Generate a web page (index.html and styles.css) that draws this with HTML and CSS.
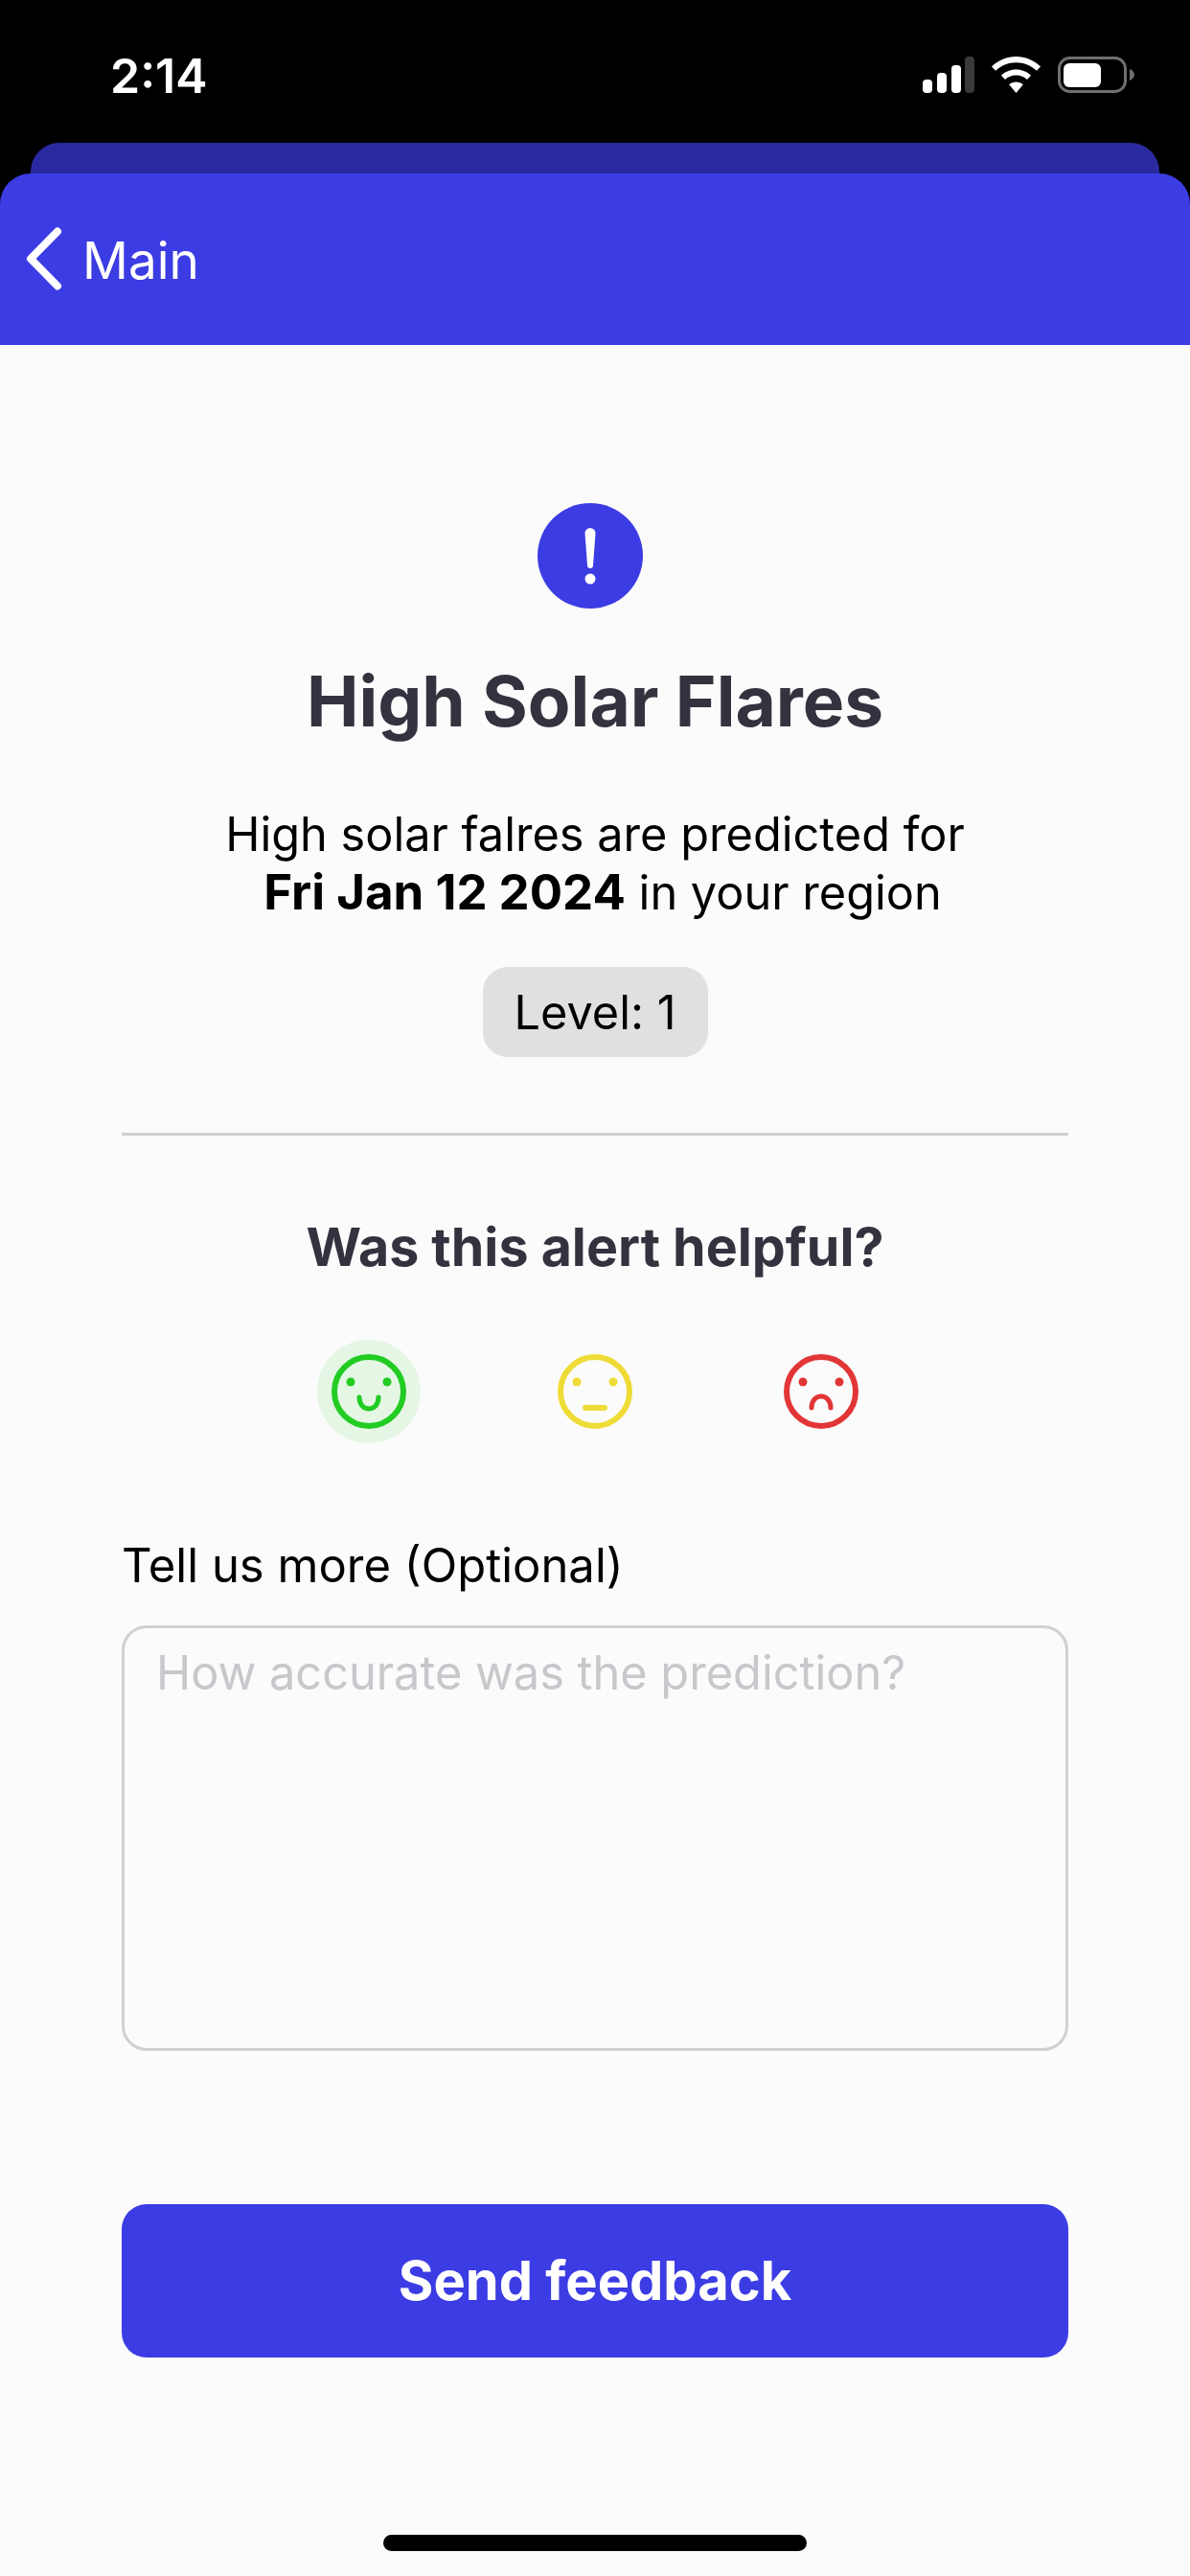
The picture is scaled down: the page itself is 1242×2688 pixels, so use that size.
FILE: index.html
```html
<!DOCTYPE html>
<html lang="en">
<head>
<meta charset="utf-8">
<title>High Solar Flares</title>
<link rel="stylesheet" href="styles.css">
</head>
<body>
<div class="screen">
  <header class="status">
    <span class="time">2:14</span>
    <div class="status-icons">
      <svg class="signal" width="54" height="38" viewBox="0 0 54 38">
        <rect x="0" y="24" width="10" height="14" rx="4" fill="#fff"/>
        <rect x="15" y="17" width="10" height="21" rx="4" fill="#fff"/>
        <rect x="30" y="9" width="10" height="29" rx="4" fill="#fff"/>
        <rect x="44" y="0" width="10" height="38" rx="4" fill="#3a3a3a"/>
      </svg>
      <svg class="wifi" width="51" height="38" viewBox="0 0 51 38">
        <path d="M25.5 0C35 0 44 3.800 51 10.500L47 14.800C41.200 9.300 33.700 6.200 25.500 6.200C17.300 6.200 9.800 9.300 4 14.800L0 10.500C7 3.800 16 0 25.500 0Z" fill="#fff"/>
        <path d="M25.500 13.500C31.500 13.500 36.900 15.800 41 19.700L37 24C33.900 21.100 29.900 19.500 25.500 19.500C21.100 19.500 17.100 21.100 14 24L10 19.700C14.100 15.800 19.500 13.500 25.500 13.500Z" fill="#fff"/>
        <path d="M25.500 26.500C28.300 26.500 30.800 27.500 32.800 29.200L25.500 38L18.200 29.200C20.200 27.500 22.700 26.500 25.500 26.500Z" fill="#fff"/>
      </svg>
      <svg class="battery" width="80" height="38" viewBox="0 0 80 38">
        <rect x="1.500" y="1.500" width="69" height="35" rx="11" fill="none" stroke="#6e6e6e" stroke-width="3"/>
        <rect x="6" y="7" width="39" height="25" rx="6" fill="#fff"/>
        <path d="M75 13C78 14 80 16.500 80 19C80 21.500 78 24 75 25Z" fill="#6e6e6e"/>
      </svg>
    </div>
  </header>

  <div class="sheet-back"></div>

  <nav class="nav">
    <svg class="chevron" width="38" height="66" viewBox="0 0 38 66">
      <path d="M33 4.500L5 33L33 61.500" fill="none" stroke="#fff" stroke-width="8" stroke-linecap="round" stroke-linejoin="round"/>
    </svg>
    <span class="nav-label">Main</span>
  </nav>

  <main class="content">
    <div class="alert-icon">
      <svg width="110" height="110" viewBox="0 0 110 110">
        <path d="M49.500 31.500a5.500 5.500 0 0 1 11 0L58 65a3 3 0 0 1-6 0Z" fill="#fff"/>
        <circle cx="55" cy="79" r="5.500" fill="#fff"/>
      </svg>
    </div>
    <h1 class="title">High Solar Flares</h1>
    <p class="message">High solar falres are predicted for<br><strong>Fri Jan 12 2024</strong> in your region</p>
    <div class="level">Level: 1</div>
    <hr class="divider">
    <h2 class="question">Was this alert helpful?</h2>
    <div class="faces">
      <div class="face face-selected">
        <svg width="78" height="78" viewBox="0 0 78 78" fill="none">
          <circle cx="39" cy="39" r="36" stroke="#22cc22" stroke-width="6"/>
          <circle cx="20" cy="29" r="4.500" fill="#22cc22"/>
          <circle cx="58" cy="29" r="4.500" fill="#22cc22"/>
          <path d="M29 45C29 61 49 61 49 45" stroke="#22cc22" stroke-width="5" stroke-linecap="round"/>
        </svg>
      </div>
      <div class="face">
        <svg width="78" height="78" viewBox="0 0 78 78" fill="none">
          <circle cx="39" cy="39" r="36" stroke="#efdb36" stroke-width="6"/>
          <circle cx="20" cy="29" r="4.500" fill="#efdb36"/>
          <circle cx="58" cy="29" r="4.500" fill="#efdb36"/>
          <path d="M29 56H49" stroke="#efdb36" stroke-width="6" stroke-linecap="round"/>
        </svg>
      </div>
      <div class="face">
        <svg width="78" height="78" viewBox="0 0 78 78" fill="none">
          <circle cx="39" cy="39" r="36" stroke="#e23636" stroke-width="6"/>
          <circle cx="20" cy="29" r="4.500" fill="#e23636"/>
          <circle cx="58" cy="29" r="4.500" fill="#e23636"/>
          <path d="M29 56C29 40 49 40 49 56" stroke="#e23636" stroke-width="5" stroke-linecap="round"/>
        </svg>
      </div>
    </div>
    <div class="field-label">Tell us more (Optional)</div>
    <div class="input"><span class="placeholder">How accurate was the prediction?</span></div>
    <button class="send" type="button">Send feedback</button>
    <div class="home-bar"></div>
  </main>
</div>
</body>
</html>
```
FILE: styles.css
```css
* { box-sizing: border-box; }
html, body { margin: 0; padding: 0; }
body {
  width: 1242px;
  height: 2688px;
  overflow: hidden;
  background: #000;
  font-family: Inter, "Liberation Sans", sans-serif;
}
.screen { width: 1242px; height: 2688px; display: flex; flex-direction: column; }

.status {
  height: 149px;
  flex: none;
  display: flex;
  justify-content: space-between;
  align-items: flex-start;
  padding: 51px 58px 0 115px;
  color: #fff;
}
.time { font-size: 50px; line-height: 56px; font-weight: 600; }
.status-icons { display: flex; gap: 18px; padding-top: 8px; }
.status-icons svg { display: block; }

.sheet-back {
  flex: none;
  height: 62px;
  margin: 0 32px -30px;
  background: #2a2aa0;
  border-radius: 30px 30px 0 0;
}
.nav {
  position: relative;
  flex: none;
  height: 179px;
  background: #3c3ce4;
  border-radius: 32px 32px 0 0;
  display: flex;
  align-items: flex-start;
  padding: 56px 0 0 27px;
  gap: 21px;
  color: #fff;
}
.chevron { display: block; }
.nav-label { font-size: 53px; line-height: 64px; font-weight: 400; margin-top: 3px; }

.content {
  flex: 1;
  position: relative;
  background: #fbfbfb;
  display: flex;
  flex-direction: column;
  align-items: center;
  padding-top: 165px;
}
.alert-icon {
  width: 110px;
  height: 110px;
  border-radius: 50%;
  background: #3c3ce4;
  margin-right: 10px;
}
.alert-icon svg { display: block; }
.title {
  margin: 57px 0 0;
  font-size: 73px;
  line-height: 80px;
  font-weight: 700;
  color: #33333f;
}
.message {
  margin: 69px 0 0;
  font-size: 48.700px;
  line-height: 60px;
  text-align: center;
  color: #000;
}
.message strong { font-size: 51px; line-height: 60px; font-weight: 700; margin-left: 16px; }
.level {
  margin-top: 47px;
  height: 94px;
  width: 235px;
  border-radius: 26px;
  background: #e0e0e0;
  display: flex;
  align-items: center;
  justify-content: center;
  font-size: 48.700px;
  color: #000;
}
.divider {
  margin: 79px 0 0;
  width: 988px;
  height: 3px;
  border: 0;
  background: #d0d0d0;
}
.question {
  margin: 81px 0 0;
  font-size: 55.500px;
  line-height: 70px;
  font-weight: 700;
  color: #33333f;
}
.faces { margin-top: 62px; display: flex; gap: 128px; }
.face {
  width: 108px;
  height: 108px;
  border-radius: 50%;
  display: flex;
  align-items: center;
  justify-content: center;
}
.face-selected { background: #e5f6e5; }
.field-label {
  margin-top: 98px;
  width: 988px;
  font-size: 49px;
  line-height: 60px;
  color: #000;
}
.input {
  margin-top: 32px;
  width: 988px;
  height: 444px;
  border: 3px solid #d0d0d0;
  border-radius: 26px;
  padding: 17px 33px;
}
.placeholder { font-size: 48.700px; line-height: 60px; color: #c7c7cc; }
.send {
  margin-top: 160px;
  width: 988px;
  height: 160px;
  border: 0;
  border-radius: 26px;
  background: #3c3ce4;
  color: #fff;
  font-family: inherit;
  font-size: 56px;
  font-weight: 700;
}
.home-bar {
  margin-top: 185px;
  width: 442px;
  height: 17px;
  border-radius: 9px;
  background: #000;
}
```
